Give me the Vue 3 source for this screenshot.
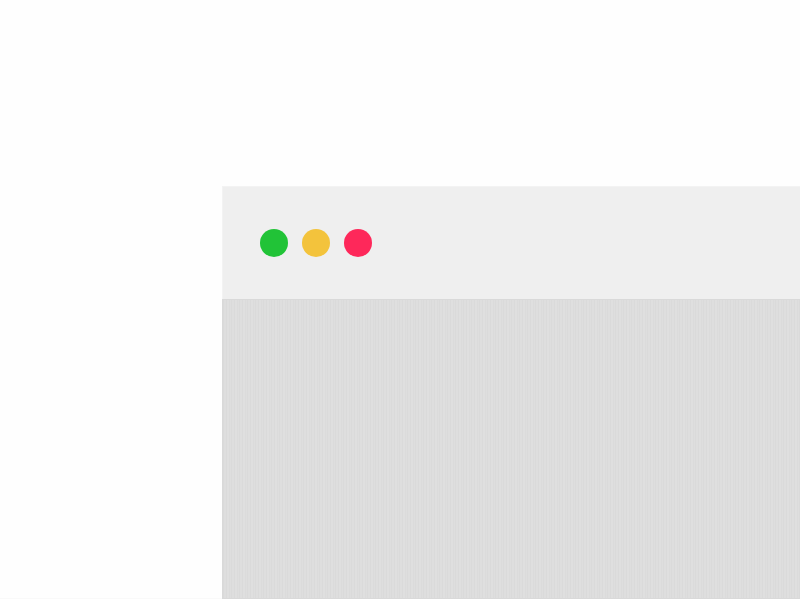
<script setup>
const dots = ['green', 'yellow', 'red']
</script>

<template>
  <main class="stage">
    <section class="window">
      <header class="titlebar">
        <span v-for="dot in dots" :key="dot" class="dot" :class="dot"></span>
      </header>
      <div class="content"></div>
    </section>
  </main>
</template>

<style>
body {
  margin: 0;
  background: #ffffff;
}
</style>

<style scoped>
.stage {
  display: flex;
  box-sizing: border-box;
  min-height: calc(100vh - 1px);
  padding: 186px 0 0 222px;
  border-bottom: 1px solid #f9f9f9;
  background: #fefefe;
}

.window {
  display: flex;
  flex: 1;
  flex-direction: column;
  margin-bottom: -1px;
  background: #efefef;
}

.titlebar {
  display: flex;
  align-items: center;
  gap: 14px;
  padding: 43px 38px 42px;
  box-shadow: inset 1px 1px #f3f3f3;
}

.dot {
  width: 28px;
  height: 28px;
  border-radius: 50%;
}

.green {
  background: #21c337;
}

.yellow {
  background: #f3c33c;
}

.red {
  background: #fe285a;
}

.content {
  flex: 1;
  border: solid #d9d9d9;
  border-width: 1px 0 1px 1px;
  background: repeating-linear-gradient(
    90deg,
    #dadada 0 1px,
    #dedede 1px 3px,
    #dadada 3px 4px,
    #dfdfdf 4px 6px,
    #dbdbdb 6px 7px,
    #dedede 7px 8px
  );
}
</style>
